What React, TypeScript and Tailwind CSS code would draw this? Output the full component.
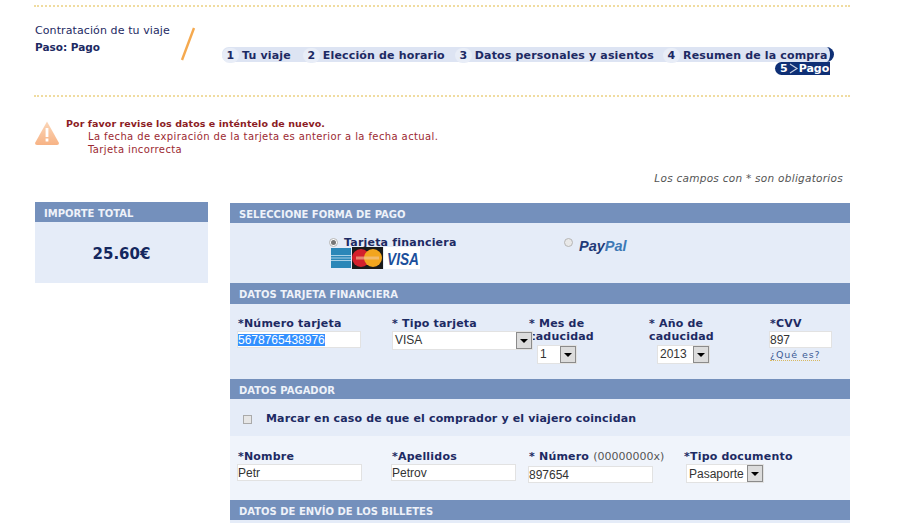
import React from "react";

const Dotted = () => <div className="h-[2px] w-full border-t-2 border-dotted border-[#f0dca0]" />;

const Bar = ({ children, tall }: { children: React.ReactNode; tall?: boolean }) => (
  <div className={`flex items-center bg-[#7490bc] pl-[9px] text-[10px] font-bold leading-none text-[#eef2f9] ${tall ? "h-[21px] pt-[2px]" : "h-5 pt-[4px]"}`}>{children}</div>
);

const Arrow = () => (
  <span className="flex h-[17px] w-4 shrink-0 items-center justify-center border border-[#8b8b8b] bg-[#dcdcdc]">
    <span className="h-0 w-0 border-x-[4px] border-t-[4px] border-x-transparent border-t-black" />
  </span>
);

const Select = ({ value, cls }: { value: string; cls: string }) => (
  <div className={`flex h-[19px] items-center justify-between border border-[#e2e2e2] bg-white pl-[2px] font-['Liberation_Sans',sans-serif] text-[12px] font-normal tracking-normal text-[#333] ${cls}`}>
    <span>{value}</span>
    <Arrow />
  </div>
);

const Input = ({ children, cls }: { children?: React.ReactNode; cls: string }) => (
  <div className={`-ml-px flex h-[17px] items-center border border-[#e2e2e2] bg-white font-['Liberation_Sans',sans-serif] text-[12px] font-normal leading-none tracking-normal text-[#333] ${cls}`}>
    {children}
  </div>
);

const Step = ({ n, label, gap }: { n: string; label: string; gap?: string }) => (
  <span className={`flex items-center ${gap ?? ""}`}>
    <span className="flex h-[15px] w-[17px] items-center justify-center rounded-full bg-[#e8edf7]">{n}</span>
    <span className="ml-[3px]">{label}</span>
  </span>
);

const CardLogos = () => (
  <svg width="100" height="22" viewBox="0 0 100 22" className="block">
    <rect x="1" y="1" width="20" height="20" fill="#2b87b8" />
    <rect x="1" y="8" width="20" height="1" fill="#a8d0e6" />
    <rect x="1" y="10.5" width="20" height="1" fill="#a8d0e6" />
    <rect x="1" y="13" width="20" height="1" fill="#a8d0e6" />
    <rect x="22" y="0" width="31" height="22" fill="#1a1a1a" />
    <circle cx="31" cy="11" r="9" fill="#d3202c" />
    <circle cx="43" cy="11" r="9" fill="#f2a51e" />
    <rect x="26" y="9.5" width="23" height="3" fill="#f4c9a0" opacity="0.6" />
    <rect x="54" y="0" width="36" height="22" fill="#fff" />
    <text x="57" y="18" textLength="32" lengthAdjust="spacingAndGlyphs" fontFamily="'Liberation Sans',sans-serif" fontWeight="700" fontStyle="italic" fontSize="16" fill="#1b4f9c">VISA</text>
  </svg>
);

export default function App() {
  return (
    <div className="h-[523px] w-[900px] overflow-hidden bg-white font-['DejaVu_Sans',sans-serif] text-[#1d2a63]">
      <div className="ml-[34px] w-[816px] pt-[5px]">
        <Dotted />

        <div className="flex h-[88px] pt-[15px]">
          <div className="w-[146px] pl-px leading-[17px]">
            <div className="text-[11px] tracking-[0.1px]">Contratación de tu viaje</div>
            <div className="text-[10.5px] font-bold">Paso: Pago</div>
          </div>
          <svg width="16" height="34" viewBox="0 0 16 34" className="mt-[5px] shrink-0">
            <line x1="14" y1="1" x2="2" y2="33" stroke="#f5a94f" strokeWidth="2.4" />
          </svg>
          <div className="ml-[26px] mt-[25px] flex w-[614px] flex-col text-[11px] font-bold leading-none">
            <div className="flex h-[15px] w-[612px] items-center rounded-l-[8px] rounded-r-[9px] border-r-[4px] border-[#0e2f75] bg-[#dde4f3] pt-px tracking-[0.16px]">
              <Step n="1" label="Tu viaje" />
              <Step n="2" label="Elección de horario" gap="ml-[12px]" />
              <Step n="3" label="Datos personales y asientos" gap="ml-[10px]" />
              <Step n="4" label="Resumen de la compra" gap="ml-[9px]" />
            </div>
            <div className="ml-[553px] flex h-[13px] w-[55px] items-center rounded-l-[7px] bg-[#0e2f75] pl-[5px] text-white">
              <span>5</span>
              <svg width="10" height="11" viewBox="0 0 10 11" className="ml-[1px] shrink-0">
                <path d="M1 1 L8 5.5 L1 10" fill="none" stroke="#c8cfe0" strokeWidth="1.2" />
              </svg>
              <span>Pago</span>
            </div>
          </div>
        </div>

        <Dotted />

        <div className="flex pt-[20px] text-[#9c2a32]">
          <svg width="26" height="26" viewBox="0 0 26 26" className="mt-[3px] shrink-0">
            <defs>
              <linearGradient id="w" x1="0" y1="0" x2="0" y2="1">
                <stop offset="0" stopColor="#fbd6b8" />
                <stop offset="1" stopColor="#f7b385" />
              </linearGradient>
            </defs>
            <path d="M13 1.5 L25 23 Q25 25 23 25 L3 25 Q1 25 1 23 Z" fill="url(#w)" />
            <rect x="11.6" y="8" width="2.8" height="9" fill="#fff" />
            <rect x="11.6" y="18.5" width="2.8" height="3" fill="#fff" />
          </svg>
          <div className="ml-[6px] text-[9.5px] leading-[13px]">
            <div className="font-bold tracking-[0.08px] text-[#8c1c24]">Por favor revise los datos e inténtelo de nuevo.</div>
            <div className="pl-[22px] text-[10px] tracking-[0.39px]">La fecha de expiración de la tarjeta es anterior a la fecha actual.</div>
            <div className="pl-[22px] text-[10px] tracking-[0.39px]">Tarjeta incorrecta</div>
          </div>
        </div>

        <div className="mt-[15px] pr-[7px] text-right text-[10.5px] italic leading-[14px] tracking-[0.27px] text-[#555]">Los campos con * son obligatorios</div>

        <div className="mt-[17px] flex items-start">
          <div className="ml-px w-[173px]">
            <Bar>IMPORTE TOTAL</Bar>
            <div className="flex h-[61px] items-center justify-center bg-[#e5ecf8] pt-[3px] text-[15px] font-bold text-[#14275e]">25.60€</div>
          </div>

          <div className="ml-[22px] mt-px w-[620px]">
            <Bar>SELECCIONE FORMA DE PAGO</Bar>
            <div className="flex h-[60px] bg-[#e5ecf8] pl-[99px] pt-[14px] text-[11px] font-bold leading-none">
              <div className="w-[235px]">
                <div className="flex items-center">
                  <span className="flex h-[9px] w-[9px] items-center justify-center rounded-full border border-[#b5b5b5] bg-white">
                    <span className="h-[5px] w-[5px] rounded-full bg-[#777]" />
                  </span>
                  <span className="ml-[6px] tracking-[0.2px]">Tarjeta financiera</span>
                </div>
                <div className="-mt-px pl-px"><CardLogos /></div>
              </div>
              <div className="flex items-start">
                <span className="mt-px h-[9px] w-[9px] rounded-full border border-[#b5b5b5] bg-[#e8e8e8]" />
                <span className="ml-[6px] mt-px font-['Liberation_Sans',sans-serif] text-[14.5px] italic leading-[16px]">
                  <span className="text-[#1f3a78]">Pay</span>
                  <span className="text-[#3d79b5]">Pal</span>
                </span>
              </div>
            </div>

            <Bar tall>DATOS TARJETA FINANCIERA</Bar>
            <div className="grid h-[75px] grid-cols-[154px_137px_120px_121px_auto] bg-[#e5ecf8] pl-[8px] pt-[13px] text-[11px] font-bold leading-[13px] tracking-[0.2px]">
              <div>
                <div>*Número tarjeta</div>
                <Input cls="mt-px w-[124px]">
                  <span className="bg-[#3390ff] text-white">5678765438976</span>
                </Input>
              </div>
              <div>
                <div>* Tipo tarjeta</div>
                <Select value="VISA" cls="relative z-10 mt-px w-[141px]" />
              </div>
              <div>
                <div>* Mes de<br />caducidad</div>
                <div className="mt-[2px] flex pl-[8px]"><Select value="1" cls="w-[40px]" /></div>
              </div>
              <div>
                <div>* Año de<br />caducidad</div>
                <div className="mt-[2px] flex pl-[8px]"><Select value="2013" cls="w-[53px]" /></div>
              </div>
              <div>
                <div>*CVV</div>
                <Input cls="mt-px w-[63px]">897</Input>
                <span className="mt-[1px] inline-block border-b border-dotted border-[#d8b860] text-[9.5px] font-normal leading-[11px] tracking-[0.9px] text-[#3c5a94]">¿Qué es?</span>
              </div>
            </div>

            <Bar>DATOS PAGADOR</Bar>
            <div className="flex h-[37px] items-center bg-[#e5ecf8] pl-[13px] pt-[3px] text-[11px] font-bold tracking-[0.15px]">
              <span className="h-[9px] w-[9px] border border-[#aaa] bg-[#e6e6e6]" />
              <span className="ml-[14px]">Marcar en caso de que el comprador y el viajero coincidan</span>
            </div>
            <div className="grid h-[64px] grid-cols-[154px_137px_155px_auto] bg-[#f0f4fb] pl-[8px] pt-[15px] text-[11px] font-bold leading-[12px] tracking-[0.2px]">
              <div>
                <div>*Nombre</div>
                <Input cls="mt-[1px] w-[125px]">Petr</Input>
              </div>
              <div>
                <div>*Apellidos</div>
                <Input cls="mt-[1px] w-[125px]">Petrov</Input>
              </div>
              <div>
                <div>* Número <span className="text-[11px] font-normal tracking-normal text-[#555]">(00000000x)</span></div>
                <Input cls="mt-[3px] w-[125px]">897654</Input>
              </div>
              <div>
                <div>*Tipo documento</div>
                <Select value="Pasaporte" cls="mt-[1px] ml-[2px] w-[78px]" />
              </div>
            </div>

            <Bar>DATOS DE ENVÍO DE LOS BILLETES</Bar>
            <div className="h-10 bg-[#e5ecf8]" />
          </div>
        </div>
      </div>
    </div>
  );
}
